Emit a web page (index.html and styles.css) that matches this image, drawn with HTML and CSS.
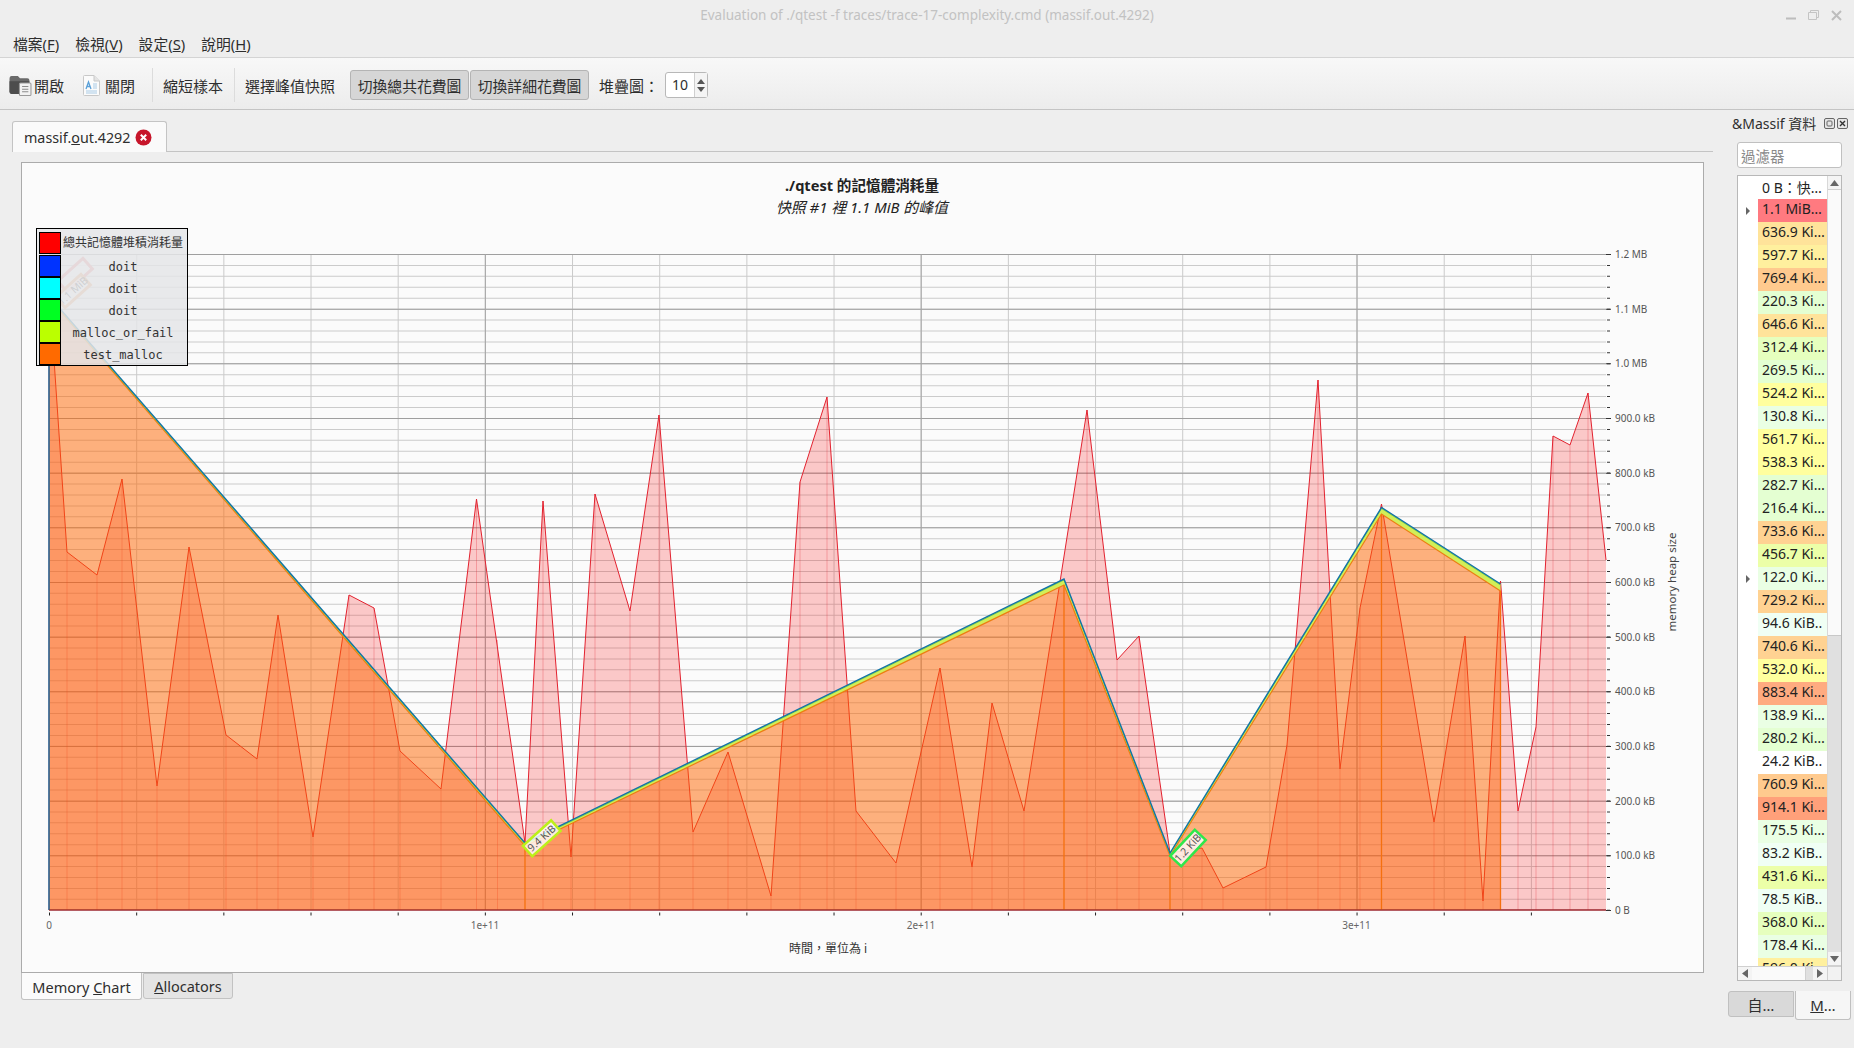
FILE: index.html
```html
<!DOCTYPE html>
<html lang="zh-Hant">
<head>
<meta charset="utf-8">
<title>Massif Visualizer</title>
<link rel="stylesheet" href="styles.css">
</head>
<body>
<div class="app">
  <header class="titlebar">
    <span class="title-text">Evaluation of ./qtest -f traces/trace-17-complexity.cmd (massif.out.4292)</span>
    <div class="win-controls">
      <svg width="10" height="10" viewBox="0 0 10 10"><path d="M0 8.5H10" stroke="#bdbdbd" stroke-width="2"/></svg>
      <svg width="11" height="10" viewBox="0 0 11 10"><path d="M.5 2.5H8.5V9.5H.5ZM2.5 2.5V.5H10.5V7.5H8.5" fill="none" stroke="#c4c4c4"/></svg>
      <svg width="11" height="11" viewBox="0 0 11 11"><path d="M1 1L10 10M10 1L1 10" stroke="#bdbdbd" stroke-width="2"/></svg>
    </div>
  </header>
  <nav class="menubar">
    <span class="menu-item">檔案(<u>F</u>)</span>
    <span class="menu-item">檢視(<u>V</u>)</span>
    <span class="menu-item">設定(<u>S</u>)</span>
    <span class="menu-item">說明(<u>H</u>)</span>
  </nav>
  <div class="toolbar">
    <svg class="ic-open" width="23" height="22" viewBox="0 0 21 21">
      <path d="M0 5Q0 2 2 2H8L10 4H17Q19 4 19 6V19H2Q0 19 0 17Z" fill="#6a6a6a"/>
      <path d="M0 7H19V19H2Q0 19 0 17Z" fill="#4d4d4d"/>
      <rect x="9.5" y="8.5" width="11" height="12" rx="1" fill="#f2f2f2" stroke="#9a9a9a"/>
      <path d="M12 12H18M12 14.5H18M12 17H18" stroke="#8c8c8c"/>
    </svg>
    <span class="tool-text t-open">開啟</span>
    <svg class="ic-close" width="17" height="21" viewBox="0 0 17 21">
      <path d="M.5 1.5Q.5 .5 1.5 .5H11L16.5 6V19.5Q16.5 20.5 15.5 20.5H1.5Q.5 20.5 .5 19.5Z" fill="#fbfbfb" stroke="#c8c8c8"/>
      <path d="M11 .5V6H16.5" fill="#e4e4e4" stroke="#c8c8c8"/>
      <path d="M3 14L5.5 7L8 14M4 11.5H7" fill="none" stroke="#5aa0d8" stroke-width="1.3"/>
      <path d="M10 9H14M10 11H14M10 13H14M3 16H14M3 18H14" stroke="#a9cbe6"/>
    </svg>
    <span class="tool-text t-close">關閉</span>
    <span class="tool-sep s-one"></span>
    <span class="tool-text t-short">縮短樣本</span>
    <span class="tool-sep s-two"></span>
    <span class="tool-text t-peak">選擇峰值快照</span>
    <span class="tool-btn b-one">切換總共花費圖</span>
    <span class="tool-btn b-two">切換詳細花費圖</span>
    <span class="tool-text t-stack">堆疊圖：</span>
    <div class="spin">
      <span class="spin-value">10</span>
      <span class="spin-arrows">
        <svg width="12" height="24" viewBox="0 0 12 24"><path d="M6 6L10 11H2Z" fill="#555"/><path d="M6 19L10 14H2Z" fill="#555"/></svg>
      </span>
    </div>
  </div>

  <div class="workspace">
    <main class="main">
      <div class="doc-tabs">
        <div class="doc-tab">
          <span>massif.<u>o</u>ut.4292</span>
          <svg width="17" height="17" viewBox="0 0 17 17"><circle cx="8.5" cy="8.5" r="8" fill="#c7162b"/><path d="M5.8 5.8L11.2 11.2M11.2 5.8L5.8 11.2" stroke="#fff" stroke-width="2"/></svg>
        </div>
      </div>
      <section class="chart-frame">
        <svg class="chart" width="1681" height="809" viewBox="22 163 1681 809">
          <text class="chart-title" x="862" y="191">./qtest 的記憶體消耗量</text>
          <text class="chart-sub" x="862" y="213">快照 #1 裡 1.1 MiB 的峰值</text>

          <!-- grid: dash patterns make the evenly spaced rules -->
          <line class="grid-h-minor" x1="827.5" y1="254" x2="827.5" y2="910"/>
          <line class="grid-v-minor" x1="49" y1="582" x2="1606" y2="582"/>
          <line class="grid-h-major" x1="827.5" y1="254" x2="827.5" y2="910"/>
          <line class="grid-v-major" x1="49" y1="582" x2="1606" y2="582"/>

          <!-- total heap -->
          <polyline class="total" points="1606,910 49,910 49,285 67,552 97,575 122,479 157,786 189,547 226,735 257,759 278,615 313,837 349,595 374,608 400,751 441,789 476.5,499 525,843 543,501 571,857 595,494 630,611 659,415 693,832 728,752 771,896 800,482 827,397 856,811 896,863 940,668 972,867 992,703 1024,811 1087,410 1117,660 1139,636 1170,853 1202,848 1223,888 1266,867 1287,745 1318,380 1340,769 1360,608 1381.5,504 1434,822 1465,636 1483,901 1500.5,581 1518,811 1536,727 1553,436 1570,445 1588,393 1606,560"/>
          <path class="snap" d="M67 910V552M97 910V575M122 910V479M157 910V786M189 910V547M226 910V735M257 910V759M278 910V615M313 910V837M349 910V595M374 910V608M400 910V751M441 910V789M476.5 910V499M497.5 910V640M543 910V501M571 910V857M595 910V494M630 910V611M659 910V415M693 910V832M728 910V752M771 910V896M800 910V482M827 910V397M856 910V811M896 910V863M940 910V668M972 910V867M992 910V703M1024 910V811M1087 910V410M1117 910V660M1139 910V636M1202 910V848M1223 910V888M1266 910V867M1287 910V745M1318 910V380M1340 910V769M1360 910V608M1434 910V822M1465 910V636M1483 910V901M1518 910V811M1536 910V727M1553 910V436M1570 910V445M1588 910V393"/>

          <!-- stacked allocators -->
          <polygon class="stack-orange" points="49,910 49,298 525,846 1064,585 1170,856 1381.5,514 1500.5,591 1500.5,910"/>
          <polygon class="stack-band" points="49,296 525,843 1064,579 1170,853 1381.5,507.5 1500.5,584 1500.5,591 1381.5,514 1170,856 1064,585 525,846 49,298"/>
          <path class="stack-verts" d="M525 910V846M1064 910V585M1170 910V856M1381.5 910V514M1500.5 910V591"/>
          <polyline class="line-orange" points="49,298 525,846 1064,585 1170,856 1381.5,514 1500.5,591"/>
          <polyline class="line-green" points="49,297 525,844 1064,580 1170,854 1381.5,508.5 1500.5,585"/>
          <polyline class="line-blue" points="49,910 49,296 525,843 1064,579 1170,853 1381.5,507.5 1500.5,584"/>

          <!-- axes -->
          <line class="axis-x" x1="49" y1="910" x2="1606" y2="910"/>
          <line class="tick-x" x1="49" y1="914" x2="1606" y2="914"/>
          <line class="tick-y" x1="1608.5" y1="254" x2="1608.5" y2="911"/>
          <line class="tick-y-major" x1="1608.5" y1="254" x2="1608.5" y2="911"/>

          <g class="y-labels">
            <text x="1615" y="258">1.2 MB</text>
            <text x="1615" y="313">1.1 MB</text>
            <text x="1615" y="367">1.0 MB</text>
            <text x="1615" y="422">900.0 kB</text>
            <text x="1615" y="477">800.0 kB</text>
            <text x="1615" y="531">700.0 kB</text>
            <text x="1615" y="586">600.0 kB</text>
            <text x="1615" y="641">500.0 kB</text>
            <text x="1615" y="695">400.0 kB</text>
            <text x="1615" y="750">300.0 kB</text>
            <text x="1615" y="805">200.0 kB</text>
            <text x="1615" y="859">100.0 kB</text>
            <text x="1615" y="914">0 B</text>
          </g>
          <g class="x-labels">
            <text x="49" y="929">0</text>
            <text x="485" y="929">1e+11</text>
            <text x="921" y="929">2e+11</text>
            <text x="1356.5" y="929">3e+11</text>
          </g>
          <text class="x-title" x="828" y="953">時間，單位為 i</text>
          <text class="y-title" transform="translate(1676 582) rotate(-90)">memory heap size</text>

          <!-- snapshot labels on the curve -->
          <g transform="translate(541.7 838.3) rotate(-42)">
            <rect class="tag tag-lime" x="-19" y="-7" width="38" height="14"/>
            <text class="tag-text" x="0" y="3.5">9.4 KiB</text>
          </g>
          <g transform="translate(1188 848) rotate(-47)">
            <rect class="tag tag-green" x="-18" y="-7.5" width="36" height="15"/>
            <text class="tag-text" x="0" y="3.5">1.2 KiB</text>
          </g>
          <g transform="translate(75 275) rotate(-42)">
            <rect class="tag tag-red" x="-17" y="-7" width="34" height="14"/>
          </g>
          <g transform="translate(73 291) rotate(-42)">
            <rect class="tag tag-orange" x="-17" y="-7" width="34" height="14"/>
            <text class="tag-text" x="0" y="3.5">1.1 MiB</text>
          </g>
        </svg>

        <div class="legend">
          <span class="sw sw-red"></span><span class="lg-text lg-first">總共記憶體堆積消耗量</span>
          <span class="sw sw-blue"></span><span class="lg-text">doit</span>
          <span class="sw sw-cyan"></span><span class="lg-text">doit</span>
          <span class="sw sw-green"></span><span class="lg-text">doit</span>
          <span class="sw sw-lime"></span><span class="lg-text">malloc_or_fail</span>
          <span class="sw sw-orange"></span><span class="lg-text">test_malloc</span>
        </div>
      </section>
      <div class="view-tabs">
        <span class="view-tab active"><span>Memory <u>C</u>hart</span></span>
        <span class="view-tab"><span><u>A</u>llocators</span></span>
      </div>
    </main>

    <aside class="dock">
      <div class="dock-title">
        <span>&amp;Massif 資料</span>
        <span class="dock-btns">
          <svg width="11" height="11" viewBox="0 0 11 11"><rect x=".5" y=".5" width="10" height="10" rx="1.5" fill="#e6e6e6" stroke="#666"/><rect x="3" y="3" width="5" height="5" rx="1" fill="none" stroke="#666"/></svg>
          <svg width="11" height="11" viewBox="0 0 11 11"><rect x=".5" y=".5" width="10" height="10" rx="1.5" fill="#e6e6e6" stroke="#666"/><path d="M3 3L8 8M8 3L3 8" stroke="#333" stroke-width="1.4"/></svg>
        </span>
      </div>
      <div class="filter">過濾器</div>
      <div class="tree">
        <div class="tree-main">
          <div class="rows">
            <div class="row row-top">0 B：快…</div>
            <div class="row c11 exp">1.1 MiB…</div>
            <div class="row c6">636.9 Ki…</div>
            <div class="row c5">597.7 Ki…</div>
            <div class="row c8">769.4 Ki…</div>
            <div class="row c2">220.3 Ki…</div>
            <div class="row c6">646.6 Ki…</div>
            <div class="row c3">312.4 Ki…</div>
            <div class="row c2">269.5 Ki…</div>
            <div class="row c4">524.2 Ki…</div>
            <div class="row c1">130.8 Ki…</div>
            <div class="row c4">561.7 Ki…</div>
            <div class="row c4">538.3 Ki…</div>
            <div class="row c2">282.7 Ki…</div>
            <div class="row c2">216.4 Ki…</div>
            <div class="row c7">733.6 Ki…</div>
            <div class="row c3b">456.7 Ki…</div>
            <div class="row c1 exp">122.0 Ki…</div>
            <div class="row c7">729.2 Ki…</div>
            <div class="row c0">94.6 KiB..</div>
            <div class="row c7">740.6 Ki…</div>
            <div class="row c4">532.0 Ki…</div>
            <div class="row c9">883.4 Ki…</div>
            <div class="row c1">138.9 Ki…</div>
            <div class="row c2">280.2 Ki…</div>
            <div class="row">24.2 KiB..</div>
            <div class="row c8">760.9 Ki…</div>
            <div class="row c10">914.1 Ki…</div>
            <div class="row c1">175.5 Ki…</div>
            <div class="row c0">83.2 KiB..</div>
            <div class="row c3b">431.6 Ki…</div>
            <div class="row c0">78.5 KiB..</div>
            <div class="row c3">368.0 Ki…</div>
            <div class="row c1">178.4 Ki…</div>
            <div class="row c5">596.0 Ki…</div>
          </div>
          <div class="vscroll">
            <span class="sb-btn"><svg width="9" height="6" viewBox="0 0 9 6"><path d="M4.5 0L9 6H0Z" fill="#666"/></svg></span>
            <span class="sb-thumb"></span>
            <span class="sb-track"></span>
            <span class="sb-btn"><svg width="9" height="6" viewBox="0 0 9 6"><path d="M4.5 6L9 0H0Z" fill="#666"/></svg></span>
          </div>
        </div>
        <div class="hscroll">
          <span class="hs-btn"><svg width="6" height="9" viewBox="0 0 6 9"><path d="M0 4.5L6 0V9Z" fill="#666"/></svg></span>
          <span class="hs-thumb"></span>
          <span class="hs-track"></span>
          <span class="hs-btn"><svg width="6" height="9" viewBox="0 0 6 9"><path d="M6 4.5L0 0V9Z" fill="#666"/></svg></span>
          <span class="hs-corner"></span>
        </div>
      </div>
      <div class="dock-tabs">
        <span class="dock-tab">自…</span>
        <span class="dock-tab active"><u>M</u>…</span>
      </div>
    </aside>
  </div>
</div>
</body>
</html>
```

FILE: styles.css
```css
* { box-sizing: border-box; }
html, body { margin: 0; padding: 0; }
body {
  background: #eeeeee;
  color: #2e2e2e;
  font-family: "Noto Sans", "Noto Sans CJK TC", sans-serif;
  font-size: 15px;
}
.app {
  width: 1854px;
  height: 1048px;
  display: flex;
  flex-direction: column;
  overflow: hidden;
  background: #eeeeee;
}

/* title bar */
.titlebar {
  height: 30px;
  position: relative;
  display: flex;
  align-items: center;
  justify-content: center;
  flex: none;
}
.title-text { color: #c2c2c2; font-size: 13.5px; }
.win-controls {
  position: absolute;
  right: 12px;
  top: 10px;
  display: flex;
  gap: 12px;
  align-items: flex-start;
}

/* menu */
.menubar {
  height: 27px;
  flex: none;
  display: flex;
  align-items: center;
  padding: 2px 0 0 13px;
  gap: 16px;
  font-size: 14.8px;
  line-height: 25px;
}

/* toolbar */
.toolbar {
  height: 53px;
  flex: none;
  display: flex;
  align-items: center;
  border-top: 1px solid #d4d4d4;
  border-bottom: 1px solid #c4c4c4;
  background: linear-gradient(#f8f8f8, #ececec);
  padding: 3px 0 0 9px;
}
.ic-close { margin-left: 19px; }
.tool-text { white-space: nowrap; }
.t-open { margin-left: 2px; }
.t-close { margin-left: 5px; }
.tool-sep { width: 1px; height: 34px; background: #dcdcdc; }
.s-one { margin-left: 17px; }
.t-short { margin-left: 10px; }
.s-two { margin-left: 11px; }
.t-peak { margin-left: 10px; }
.tool-btn {
  width: 119px;
  height: 30px;
  border: 1px solid #b4b4b4;
  border-radius: 3px;
  background: #d6d6d6;
  display: flex;
  align-items: center;
  justify-content: center;
  white-space: nowrap;
  font-size: 14.8px;
}
.b-one { margin-left: 15px; }
.b-two { margin-left: 1px; }
.t-stack { margin-left: 10px; }
.spin {
  margin-left: 6px;
  width: 43px;
  height: 26px;
  background: #fff;
  border: 1px solid #b8b8b8;
  border-radius: 3px;
  display: flex;
  font-size: 14px;
}
.spin-value { flex: 1; padding-left: 6px; line-height: 24px; }
.spin-arrows { width: 13px; border-left: 1px solid #cfcfcf; background: #f4f4f4; display: flex; }

/* workspace */
.workspace { flex: 1; display: flex; min-height: 0; }
.main { width: 1713px; padding-left: 12px; display: flex; flex-direction: column; flex: none; }
.doc-tabs {
  margin-top: 11px;
  height: 31px;
  border-bottom: 1px solid #c4c4c4;
  display: flex;
  flex: none;
}
.doc-tab {
  width: 155px;
  height: 31px;
  background: #fafafa;
  border: 1px solid #c4c4c4;
  border-bottom: none;
  border-radius: 3px 3px 0 0;
  display: flex;
  align-items: center;
  padding-left: 11px;
  gap: 5px;
  font-size: 14.3px;
}
.chart-frame {
  position: relative;
  margin: 10px 9px 0 9px;
  height: 811px;
  flex: none;
  background: #fbfbfb;
  border: 1px solid #ababab;
}
.chart { display: block; }

.chart-title {
  font-size: 14.6px;
  font-weight: 700;
  fill: #222;
  text-anchor: middle;
  font-family: "Noto Sans", "Noto Sans CJK TC", sans-serif;
}
.chart-sub {
  font-size: 14.9px;
  font-style: italic;
  fill: #222;
  text-anchor: middle;
  font-family: "Noto Sans", "Noto Sans CJK TC", sans-serif;
}
.grid-h-minor { stroke: #cbcbcb; stroke-width: 1557px; stroke-dasharray: 1 9.93; }
.grid-h-major { stroke: #9f9f9f; stroke-width: 1557px; stroke-dasharray: 1 53.67; }
.grid-v-minor { stroke: #cbcbcb; stroke-width: 656px; stroke-dasharray: 1 86.17; }
.grid-v-major { stroke: #a4a4a4; stroke-width: 656px; stroke-dasharray: 1 434.83; }

.total { fill: rgba(255, 0, 0, 0.2); stroke: #e2222f; stroke-width: 1; stroke-linejoin: round; }
.snap { fill: none; stroke: rgba(226, 34, 47, 0.28); stroke-width: 1; }
.stack-orange { fill: rgba(255, 102, 0, 0.5); }
.stack-band { fill: #d2ee58; }
.stack-verts { fill: none; stroke: #f5700f; stroke-width: 1.3; }
.line-orange { fill: none; stroke: #ec7d10; stroke-width: 1.2; }
.line-green { fill: none; stroke: #7fd24a; stroke-width: 1; }
.line-blue { fill: none; stroke: #1272a8; stroke-width: 1.4; }
.axis-x { stroke: #7a2a30; stroke-width: 1; }
.tick-x { stroke: #222; stroke-width: 3px; stroke-dasharray: 1 86.17; }
.tick-y { stroke: #333; stroke-width: 3px; stroke-dasharray: 1 9.93; }
.tick-y-major { stroke: #333; stroke-width: 5px; stroke-dasharray: 1 53.67; }

.y-labels text { font-size: 10px; fill: #555; }
.x-labels text { font-size: 10px; fill: #666; text-anchor: middle; }
.x-title { font-size: 12px; fill: #333; text-anchor: middle; }
.y-title { font-size: 11.5px; fill: #444; text-anchor: middle; }

.tag { fill: rgba(255, 255, 255, 0.8); stroke-width: 2.5; }
.tag-lime { stroke: #bdf01a; }
.tag-green { stroke: #2ee84a; }
.tag-red { stroke: #f08a8a; fill: rgba(255, 255, 255, 0.7); stroke-width: 3; }
.tag-orange { stroke: #f2a870; fill: rgba(255, 255, 255, 0.7); stroke-width: 3; }
.tag-text { font-size: 10.5px; fill: #555; text-anchor: middle; }

/* legend */
.legend {
  position: absolute;
  left: 14px;
  top: 65px;
  width: 152px;
  height: 138px;
  border: 1.5px solid #000;
  background: rgba(228, 229, 232, 0.85);
  display: grid;
  grid-template-columns: 22px 1fr;
  grid-template-rows: 24px repeat(5, 22px);
  padding: 2px 0 0 2px;
  overflow: hidden;
  font-family: "DejaVu Sans Mono", "Noto Sans CJK TC", monospace;
  font-size: 12px;
  color: #333;
}
.sw { border: 1.5px solid #000; width: 22px; margin: 0; }
.sw-red { background: #ff0000; height: 22px; margin-top: 1px; }
.sw-blue { background: #0033ff; }
.sw-cyan { background: #00ffff; }
.sw-green { background: #00ff22; }
.sw-lime { background: #bbff00; }
.sw-orange { background: #ff6a00; }
.lg-text { display: flex; align-items: center; justify-content: center; white-space: nowrap; padding: 2px 2px 0 0; }
.lg-first { padding: 0 2px 4px 0; }

/* bottom tabs */
.view-tabs { display: flex; margin-left: 9px; align-items: flex-start; font-size: 14.5px; }
.view-tab {
  width: 90px;
  height: 26px;
  margin-left: 1px;
  background: #e4e4e4;
  border: 1px solid #c2c2c2;
  border-radius: 0 0 3px 3px;
  display: flex;
  align-items: center;
  justify-content: center;
}
.view-tab.active {
  width: 121px;
  height: 28px;
  margin-left: 0;
  margin-top: -1px;
  padding-top: 2px;
  background: #fbfbfb;
  border-top: none;
}

/* dock */
.dock { width: 141px; flex: none; padding-left: 24px; display: flex; flex-direction: column; position: relative; }
.dock-title {
  height: 32px;
  margin-left: -5px;
  display: flex;
  align-items: center;
  justify-content: space-between;
  padding: 0 6px 6px 0;
  font-size: 14px;
  white-space: nowrap;
}
.dock-btns { display: flex; gap: 2px; }
.filter {
  width: 105px;
  height: 26px;
  background: #fff;
  border: 1px solid #c0c0c0;
  border-radius: 3px;
  padding-left: 3px;
  line-height: 26px;
  color: #8a8a8a;
  font-size: 14.5px;
  flex: none;
}
.tree {
  margin-top: 7px;
  width: 105px;
  height: 806px;
  background: #fff;
  border: 1px solid #b8b8b8;
  display: flex;
  flex-direction: column;
  flex: none;
}
.tree-main { height: 790px; display: flex; flex: none; }
.rows { width: 89px; padding-left: 20px; overflow: hidden; font-size: 14px; }
.row {
  position: relative;
  height: 23px;
  line-height: 20px;
  padding-left: 4px;
  white-space: nowrap;
  overflow: visible;
  color: #222;
}
.row-top { line-height: 23px; }
.exp::before {
  content: "";
  position: absolute;
  left: -12px;
  top: 8px;
  border-left: 4px solid #666;
  border-top: 4px solid transparent;
  border-bottom: 4px solid transparent;
}
.c0 { background: #f0fff4; }
.c1 { background: #eaffe4; }
.c2 { background: #e4ffd2; }
.c3 { background: #e6ffbe; }
.c3b { background: #ecffa8; }
.c4 { background: #ffff9e; }
.c5 { background: #fff09e; }
.c6 { background: #ffe39a; }
.c7 { background: #ffd292; }
.c8 { background: #ffca8e; }
.c9 { background: #ffab80; }
.c10 { background: #ffa07a; }
.c11 { background: #ff7a80; }
.vscroll { width: 14px; display: flex; flex-direction: column; border-left: 1px solid #d8d8d8; flex: none; }
.sb-btn { height: 14px; flex: none; background: #f4f4f4; border-bottom: 1px solid #d0d0d0; display: flex; align-items: center; justify-content: center; }
.sb-thumb { height: 446px; background: #fafafa; border-bottom: 1px solid #c8c8c8; flex: none; }
.sb-track { flex: 1; background: #e0e0e0; }
.hscroll { flex: 1; display: flex; align-items: stretch; border-top: 1px solid #d0d0d0; }
.hs-btn { width: 14px; flex: none; background: #f4f4f4; display: flex; align-items: center; justify-content: center; }
.hs-thumb { width: 54px; background: #fafafa; border-right: 1px solid #d0d0d0; flex: none; }
.hs-track { width: 7px; background: #e0e0e0; flex: none; }
.hs-corner { flex: 1; background: #f2f2f2; border-left: 1px solid #d0d0d0; }
.dock-tabs { display: flex; margin: 10px 0 0 -9px; align-items: flex-start; font-size: 15px; }
.dock-tab {
  width: 66px;
  height: 26px;
  background: #d9d9d9;
  border: 1px solid #c0c0c0;
  border-radius: 3px 0 0 3px;
  display: flex;
  align-items: center;
  justify-content: center;
}
.dock-tab.active {
  width: 56px;
  height: 29px;
  background: #f6f6f6;
  border-top: none;
  border-radius: 0 0 3px 3px;
  margin-left: 1px;
}
```
